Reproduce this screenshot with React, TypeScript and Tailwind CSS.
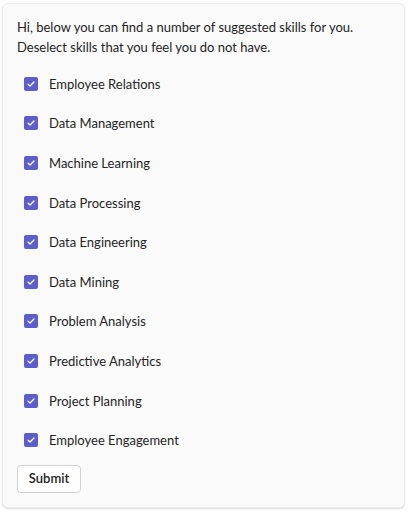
import { useState } from "react"

const initialSkills = [
  "Employee Relations",
  "Data Management",
  "Machine Learning",
  "Data Processing",
  "Data Engineering",
  "Data Mining",
  "Problem Analysis",
  "Predictive Analytics",
  "Project Planning",
  "Employee Engagement",
]

function CheckIcon() {
  return (
    <svg width="8" height="6" viewBox="0 0 8 6" fill="none">
      <path d="M1 3.1L3 5L7 1" stroke="white" strokeWidth="1.3" strokeLinecap="round" strokeLinejoin="round" />
    </svg>
  )
}

export default function App() {
  const [selected, setSelected] = useState<string[]>(initialSkills)

  const toggle = (skill: string) => {
    setSelected((prev) => (prev.includes(skill) ? prev.filter((s) => s !== skill) : [...prev, skill]))
  }

  return (
    <div className="min-h-screen bg-white pt-[3px] pl-[2px] pr-[6px] font-['Lato','Segoe_UI',sans-serif] text-[#242424]">
      <div className="rounded-md border border-[#ececec] bg-[#fafafa] shadow-[0_1px_2px_rgba(0,0,0,0.14)] px-[14px] pt-[14px] pb-[14px]">
        <p className="text-[13px] leading-[19.5px]">
          Hi, below you can find a number of suggested skills for you.
          <br />
          Deselect skills that you feel you do not have.
        </p>

        <div className="mt-[7px] flex flex-col">
          {initialSkills.map((skill) => {
            const checked = selected.includes(skill)
            return (
              <label key={skill} className="flex h-[39.6px] cursor-pointer items-center">
                <span className="w-[32px] pl-[7px]">
                  <span
                    className={
                      checked
                        ? "flex h-[14px] w-[14px] items-center justify-center rounded-[2px] bg-[#5b5fc7]"
                        : "flex h-[14px] w-[14px] items-center justify-center rounded-[2px] border border-[#616161] bg-white"
                    }
                  >
                    {checked && <CheckIcon />}
                  </span>
                </span>
                <input type="checkbox" className="hidden" checked={checked} onChange={() => toggle(skill)} />
                <span className="text-[13px] leading-5">{skill}</span>
              </label>
            )
          })}
        </div>

        <button className="mt-[5px] h-[28px] w-[64px] rounded-[4px] border border-[#d1d1d1] bg-white text-[13px] font-semibold text-[#242424]">
          Submit
        </button>
      </div>
    </div>
  )
}
